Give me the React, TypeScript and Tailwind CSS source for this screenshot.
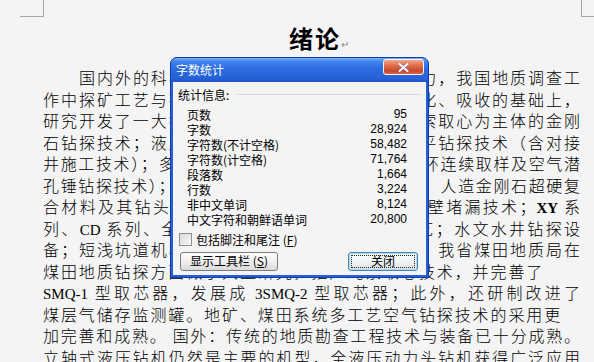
import type { ReactNode } from "react";

const stats: [string, string][] = [
  ["页数", "95"],
  ["字数", "28,924"],
  ["字符数(不计空格)", "58,482"],
  ["字符数(计空格)", "71,764"],
  ["段落数", "1,664"],
  ["行数", "3,224"],
  ["非中文单词", "8,124"],
  ["中文字符和朝鲜语单词", "20,800"],
];

// 一行正文：默认两端对齐，个别行不满行
const Line = ({
  children,
  justify = true,
  indent = false,
  fullPunct = false,
}: {
  children: ReactNode;
  justify?: boolean;
  indent?: boolean;
  fullPunct?: boolean;
}) => (
  <div
    className={`h-[21.5px] leading-[21.5px] overflow-hidden ${
      justify ? "text-justify [text-align-last:justify] tracking-[1px]" : "tracking-[1.9px]"
    } ${indent ? "pl-[36px]" : ""} ${fullPunct ? "[text-spacing-trim:space-all]" : ""}`}
  >
    {children}
  </div>
);

const Latin = ({ children, bold = false }: { children: ReactNode; bold?: boolean }) => (
  <span
    className={`[font-family:'Liberation_Serif',serif] text-[15px] tracking-normal ${
      bold ? "font-bold" : "font-normal"
    }`}
  >
    {children}
  </span>
);

const WordCountDialog = () => (
  <div className="absolute left-[170px] top-[57px] w-[259px] h-[221px] flex flex-col rounded-t-[7px] border border-[#0b3eae] bg-[#2560d6] [font-family:'Noto_Sans_CJK_SC',sans-serif]">
    {/* 标题栏 */}
    <div className="h-[24px] flex items-center justify-between rounded-t-[6px] bg-[linear-gradient(180deg,#7ab2fb_0%,#4383ec_14%,#2c6be0_45%,#2662d8_80%,#1f57cc_100%)] pl-[5px] pr-[4px]">
      <span className="text-white text-[12px] leading-none">字数统计</span>
      <div className="self-start mt-[1px] w-[41px] h-[16px] flex items-center justify-center rounded-[3px] border border-[#f3f3f3] bg-[linear-gradient(180deg,#f2a78c_0%,#e2744f_35%,#c8472a_78%,#d7664a_100%)]">
        <svg width="11" height="9" viewBox="0 0 11 9">
          <path d="M1.5 1 L9.5 8 M9.5 1 L1.5 8" stroke="#2b4fa8" strokeWidth="3.2" strokeLinecap="round" opacity="0.35" />
          <path d="M1.5 1 L9.5 8 M9.5 1 L1.5 8" stroke="#f4f8ff" strokeWidth="2.2" strokeLinecap="round" />
        </svg>
      </div>
    </div>

    {/* 内容 */}
    <div className="flex-1 mx-[2px] mb-[2px] bg-[#f4f4f4] flex flex-col pt-[5px] text-[12px] leading-[15px] text-black">
      <div className="h-[15px] flex items-center pl-[5px] pr-[5px]">
        <span>统计信息:</span>
        <div className="flex-1 ml-[8px] h-[1px] bg-[#d3d9e6]" />
      </div>

      <div className="mt-[4.5px] flex flex-col pl-[14px] pr-[19px]">
        {stats.map(([label, value]) => (
          <div key={label} className="h-[15px] flex justify-between items-center">
            <span>{label}</span>
            <span className="[font-family:'Liberation_Sans',sans-serif]">{value}</span>
          </div>
        ))}
      </div>

      <div className="mt-[5px] h-[15px] flex items-center pl-[6px]">
        <span className="w-[13px] h-[13px] border border-[#8f9090] bg-[linear-gradient(135deg,#d8d8d4_0%,#f9f9f9_100%)]" />
        <span className="ml-[4px]">
          包括脚注和尾注 (<span className="underline">F</span>)
        </span>
      </div>

      <div className="mt-[5px] flex justify-between pl-[7px] pr-[8px]">
        <button className="w-[98px] h-[19px] flex items-center justify-center rounded-[3px] border border-[#7d7d7d] bg-[linear-gradient(180deg,#fefefe_0%,#efefef_50%,#dadada_100%)] text-[12px] leading-none">
          显示工具栏 (<span className="underline">S</span>)
        </button>
        <button className="w-[70px] h-[19px] p-[2px] flex rounded-[3px] border border-[#4a86b8] bg-[linear-gradient(180deg,#fefefe_0%,#eff3f6_50%,#dbe2e8_100%)] shadow-[inset_0_0_0_1px_#a9daf3] text-[12px] leading-none">
          <span className="flex-1 flex items-center justify-center border border-dotted border-[#222]">关闭</span>
        </button>
      </div>
    </div>
  </div>
);

export default function App() {
  return (
    <div className="relative w-[594px] h-[362px] overflow-hidden bg-[#f4f4f4] text-black [font-family:'Noto_Sans_CJK_SC',sans-serif]">
      {/* 页边距标记 */}
      <div className="absolute left-[20px] top-0 w-[24px] h-[17px] border-r border-b border-[#a5a5a5]" />
      <div className="absolute left-[581px] top-0 w-[13px] h-[17px] border-l border-b border-[#a5a5a5]" />

      <div className="w-[538px] ml-[43px] pt-[23px]">
        <div className="h-[30px] leading-[30px] text-center pl-[14px] text-[24px] font-bold tracking-[2px]">
          绪论<span className="text-[10px] font-normal text-[#8a8a8a] tracking-normal">↵</span>
        </div>

        <div className="mt-[14.25px] text-[16px] font-light">
          <Line indent>国内外的科学技术工作者经过多年的不懈努力，我国地质调查工</Line>
          <Line>作中探矿工艺与勘查技术紧密结合，在引进、消化、吸收的基础上，</Line>
          <Line>研究开发了一大批新技术、新工艺，形成了以绳索取心为主体的金刚</Line>
          <Line fullPunct>石钻探技术；液压冲击回转技术；定向钻进与水平钻探技术（含对接</Line>
          <Line>井施工技术）；多工艺空气潜孔锤钻进技术；反循环连续取样及空气潜</Line>
          <Line>孔锤钻探技术）；新型金刚石钻头设计与制造技术，人造金刚石超硬复</Line>
          <Line>
            合材料及其钻头技术；无固相泥浆与化学浆液护壁堵漏技术；<Latin bold>XY</Latin> 系
          </Line>
          <Line>
            列、<Latin>CD</Latin> 系列、全液压岩心钻机与配套钻具及工艺；水文水井钻探设
          </Line>
          <Line>备；短浅坑道机械设备及配套钻探工艺。近年来，我省煤田地质局在</Line>
          <Line justify={false}>煤田地质钻探方面做了大量研究，推广绳索取心技术，并完善了</Line>
          <Line>
            <Latin>SMQ-1</Latin> 型取芯器，发展成 <Latin>3SMQ-2</Latin> 型取芯器；此外，还研制改进了
          </Line>
          <Line justify={false}>煤层气储存监测罐。地矿、煤田系统多工艺空气钻探技术的采用更</Line>
          <Line>加完善和成熟。 国外：传统的地质勘查工程技术与装备已十分成熟。</Line>
          <Line>立轴式液压钻机仍然是主要的机型，全液压动力头钻机获得广泛应用</Line>
        </div>
      </div>

      <WordCountDialog />
    </div>
  );
}
